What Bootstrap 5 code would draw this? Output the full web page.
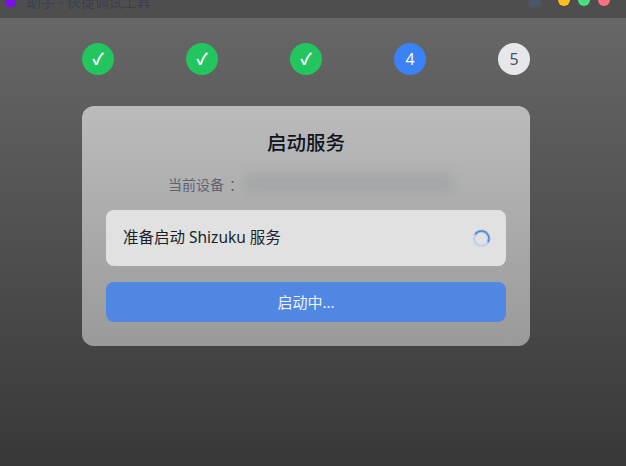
<!DOCTYPE html>
<html lang="zh">
<head>
<meta charset="utf-8">
<title>启动服务</title>
<link href="https://cdn.jsdelivr.net/npm/bootstrap@5.3.0/dist/css/bootstrap.min.css" rel="stylesheet">
<style>
html,body{height:100%;margin:0;overflow:hidden}
body{font-family:"Noto Sans","Noto Sans CJK SC",sans-serif;font-size:14px;background:#3a3a3a}
.shell{height:466px;background:linear-gradient(180deg,#676767 18px,#383838 100%)}
.titlebar{height:18px;background:#4e4e4e;padding:0 16px 0 5px;overflow:hidden}
.logo-dot{width:11px;height:12px;margin-top:-5px;border-radius:4px;background:#7a0fe8;filter:blur(.4px)}
.title-txt{font-size:14px;line-height:14px;color:#3a4150;margin:-5px 0 0 11px;filter:blur(.7px)}
.tb-blob{width:13px;height:10px;margin-top:-3px;margin-right:17px;background:#4e5768;border-radius:3px;filter:blur(1.2px)}
.light{width:12px;height:12px;margin-top:-6px;border-radius:50%}
.steps{width:448px;margin:25px 0 31px 82px}
.step{width:32px;height:32px;border-radius:50%;font-size:16px;line-height:32px;text-align:center}
.st-done{background:#22c55e;color:#fff;font-weight:700}
.st-now{background:#3b82f6;color:#fff}
.st-todo{background:#e5e7eb;color:#4b5563}
.panel{width:448px;height:240px;margin-left:82px;padding:24px;border-radius:12px;background:linear-gradient(180deg,#bbb,#9a9a9a)}
.panel-h{font-size:19.5px;line-height:26px;font-weight:500;color:#0f1420;margin:0 0 16px;text-align:center}
.dev-row{height:24px;margin-bottom:14px;padding-left:62px;color:#5b6472;font-size:14px;line-height:24px}
.dev-colon{font-family:"Noto Sans CJK TC",sans-serif;margin-left:5px}
.dev-blur{width:212px;height:22px;margin-left:0;border-radius:8px;background:#a5a8a9;filter:blur(5px)}
.status{height:56px;padding:0 16px 0 17px;border-radius:8px;background:#e1e1e1;color:#1a1f2a;font-size:15.5px;margin-bottom:16px}
.spin{width:17px;height:17px;border-radius:50%;border:2.5px solid #bcd0f0;border-top-color:#4f86e0;border-right-color:#4f86e0;transform:rotate(-15deg);filter:blur(.4px)}
.go{width:100%;height:40px;border:0;border-radius:8px;background:#4f87e3;color:#f2f5fb;font-size:15px;padding:0}
</style>
</head>
<body>
<div class="shell">
  <div class="titlebar d-flex align-items-start">
    <div class="logo-dot"></div>
    <div class="title-txt">助手 - 快捷调试工具</div>
    <div class="tb-blob ms-auto"></div>
    <div class="d-flex gap-2">
      <div class="light" style="background:#fbbf24"></div>
      <div class="light" style="background:#4ade80"></div>
      <div class="light" style="background:#fb7185"></div>
    </div>
  </div>
  <div class="steps d-flex justify-content-between">
    <div class="step st-done">✓</div>
    <div class="step st-done">✓</div>
    <div class="step st-done">✓</div>
    <div class="step st-now">4</div>
    <div class="step st-todo">5</div>
  </div>
  <div class="panel">
    <h2 class="panel-h">启动服务</h2>
    <div class="dev-row d-flex align-items-center">
      <span>当前设备<span class="dev-colon">：</span></span><div class="dev-blur"></div>
    </div>
    <div class="status d-flex align-items-center justify-content-between">
      <span>准备启动 Shizuku 服务</span>
      <div class="spin"></div>
    </div>
    <button class="btn go" type="button">启动中...</button>
  </div>
</div>
<script src="https://cdn.jsdelivr.net/npm/bootstrap@5.3.0/dist/js/bootstrap.bundle.min.js"></script>
</body>
</html>
